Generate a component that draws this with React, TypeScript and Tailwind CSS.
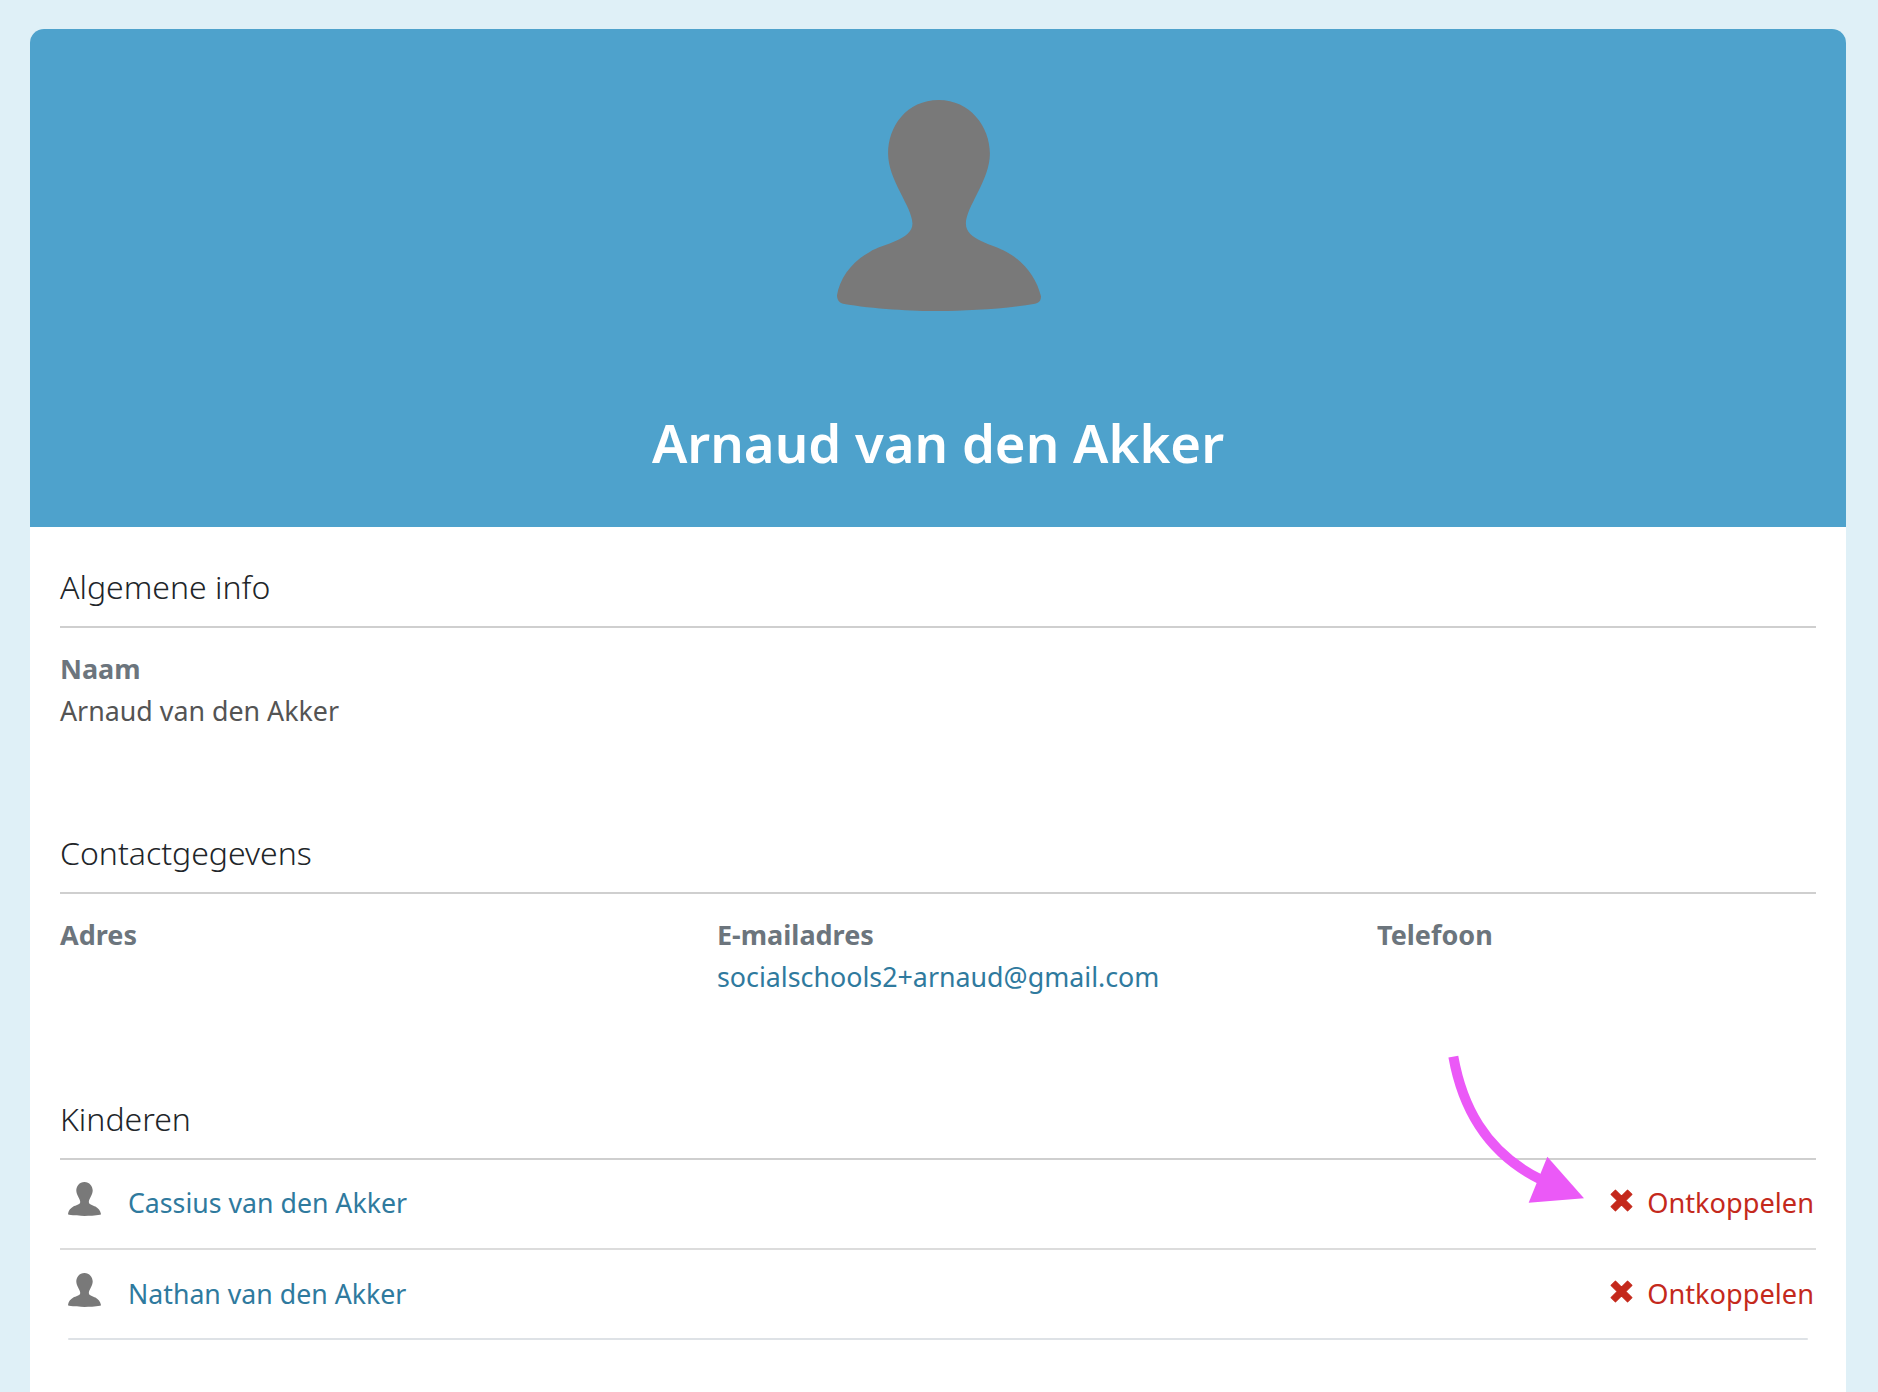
import React from 'react'

const SILHOUETTE = 'M477 90C380 90 325 170 325 250C325 330 398 410 398 460C398 510 310 520 270 545C215 575 180 625 172 675C172 690 180 698 190 700C280 716 400 722 477 722C560 722 680 716 765 700C778 698 783 690 783 678C770 625 735 575 680 545C640 522 558 510 558 460C558 410 630 330 630 250C630 170 570 90 477 90Z'

const font = { fontFamily: '"Noto Sans", sans-serif' }

function Silhouette({ className }: { className: string }) {
    return (
        <svg viewBox="172 90 611 632" className={className}>
            <path d={SILHOUETTE} fill="#797979" />
        </svg>
    )
}

function CrossIcon() {
    return (
        <svg viewBox="0 0 22 22" className="w-[23px] h-[23px] shrink-0 mt-[-5px]">
            <path d="M1 5.2 5.2 1 11 6.8 16.8 1 21 5.2 15.2 11 21 16.8 16.8 21 11 15.2 5.2 21 1 16.8 6.8 11Z" fill="#c4291c" stroke="#c4291c" strokeWidth="1" strokeLinejoin="round" />
        </svg>
    )
}

function Section({ title, children }: { title: string; children: React.ReactNode }) {
    return (
        <section>
            <h2 className="pt-[36px] pb-[15px] text-[32px] leading-[48px] font-light text-[#212529] border-b-2 border-[#cfcfcf]">{title}</h2>
            {children}
        </section>
    )
}

function Field({ label, value, link }: { label: string; value?: string; link?: boolean }) {
    return (
        <div className="h-[165px] pt-[20px]">
            <div className="text-[27px] leading-[42px] font-bold text-[#6c757d]">{label}</div>
            {value && <div className={`text-[26.8px] leading-[42px] ${link ? 'text-[#2f7a9e]' : 'text-[#545454]'}`}>{value}</div>}
        </div>
    )
}

function ChildRow({ name, last }: { name: string; last?: boolean }) {
    return (
        <div className={`relative h-[90px] flex items-center pb-[2px] ${last ? '' : 'border-b-2 border-[#dcdcdc]'}`}>
            <Silhouette className="ml-[8px] w-[33px] h-[34px] mt-[-8px]" />
            <a className="ml-[27px] text-[26.7px] leading-[42px] text-[#2f7a9e]">{name}</a>
            <div className="ml-auto mr-[2px] flex items-center gap-[14px]">
                <CrossIcon />
                <span className="text-[27.2px] leading-[42px] text-[#c4291c]">Ontkoppelen</span>
            </div>
            {last && <div className="absolute left-[8px] right-[8px] bottom-0 h-[2px] rounded-full bg-[#dee2e6]" />}
        </div>
    )
}

export default function App() {
    return (
        <div style={font} className="min-h-screen bg-[#dff0f7] px-[30px] pt-[29px] overflow-hidden">
            <div className="relative bg-white rounded-t-[14px] min-h-[1363px] w-[1816px]">
                {/* Header */}
                <div className="h-[498px] bg-[#4ea2cc] rounded-t-[14px] flex flex-col items-center">
                    <Silhouette className="mt-[71px] ml-[2px] w-[204px] h-[211px]" />
                    <h1 className="mt-[96px] text-[52.7px] leading-[72px] font-semibold text-white">Arnaud van den Akker</h1>
                </div>

                {/* Content */}
                <div className="px-[30px]">
                    <Section title="Algemene info">
                        <Field label="Naam" value="Arnaud van den Akker" />
                    </Section>
                    <Section title="Contactgegevens">
                        <div className="grid grid-cols-[657px_660px_1fr]">
                            <Field label="Adres" />
                            <Field label="E-mailadres" value="socialschools2+arnaud@gmail.com" link />
                            <Field label="Telefoon" />
                        </div>
                    </Section>
                    <Section title="Kinderen">
                        <ChildRow name="Cassius van den Akker" />
                        <ChildRow name="Nathan van den Akker" last />
                    </Section>
                </div>

                {/* Arrow annotation */}
                <svg viewBox="0 0 1434 960" className="absolute left-[1370px] top-[1011px] w-[478px] h-[320px] pointer-events-none">
                    <path d="M160 50C185 190 250 335 425 420" fill="none" stroke="#eb59f7" strokeWidth="30" />
                    <path d="M442 350 552 475 386 488Z" fill="#eb59f7" />
                </svg>
            </div>
        </div>
    )
}
